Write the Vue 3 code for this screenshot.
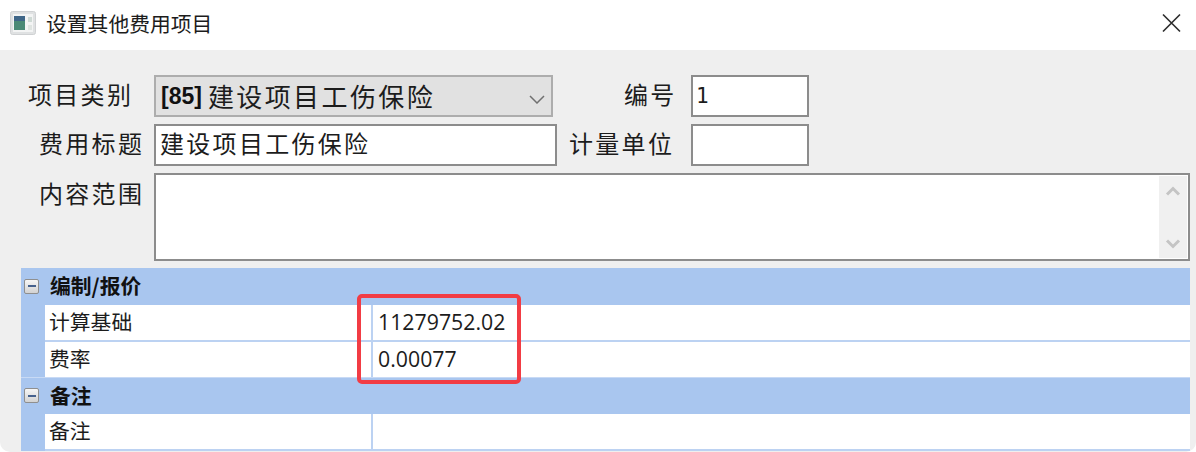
<script setup>
const sections = [
  { title: '编制/报价', rows: [{ k: '计算基础', v: '11279752.02' }, { k: '费率', v: '0.00077', tight: true }] },
  { title: '备注', rows: [{ k: '备注', v: '' }] }
]
</script>

<template>
  <div class="dialog">
    <header class="titlebar">
      <svg class="appicon" width="26" height="24" viewBox="0 0 26 24">
        <rect x="0.5" y="0.5" width="25" height="23" rx="2" fill="#dfe1e2" stroke="#cfd1d3" />
        <rect x="3" y="3" width="20" height="18" fill="#f3f4f4" />
        <rect x="4" y="5" width="11" height="14" fill="#4b8a76" />
        <rect x="4" y="5" width="11" height="5" fill="#3f6688" />
        <rect x="18" y="6" width="4" height="5" fill="#cfdad5" />
        <rect x="18" y="14" width="4" height="5" fill="#dfe4e1" />
      </svg>
      <span class="title">设置其他费用项目</span>
      <svg class="close" width="20" height="20" viewBox="0 0 20 20">
        <path d="M2 1.5 L19 18.5 M19 1.5 L2 18.5" stroke="#2b2b2b" stroke-width="1.6" fill="none" />
      </svg>
    </header>

    <main class="body">
      <section class="form">
        <div class="row">
          <label class="label first">项目类别</label>
          <div class="select">
            <b class="code">[85]</b>
            <span class="selected">建设项目工伤保险</span>
            <svg class="chev" width="16" height="9" viewBox="0 0 16 9">
              <path d="M1 1 L8 8 L15 1" stroke="#707070" stroke-width="1.5" fill="none" />
            </svg>
          </div>
          <label class="label num">编号</label>
          <div class="input small mono">1</div>
        </div>
        <div class="row">
          <label class="label">费用标题</label>
          <div class="input wide">建设项目工伤保险</div>
          <label class="label unit">计量单位</label>
          <div class="input small"></div>
        </div>
        <div class="row area-row">
          <label class="label">内容范围</label>
          <div class="textarea">
            <div class="scrollbar">
              <svg width="16" height="10" viewBox="0 0 16 10">
                <path d="M2 8.5 L8 2.5 L14 8.5" stroke="#c4c4c4" stroke-width="3" fill="none" />
              </svg>
              <svg width="16" height="10" viewBox="0 0 16 10">
                <path d="M2 1.5 L8 7.5 L14 1.5" stroke="#c4c4c4" stroke-width="3" fill="none" />
              </svg>
            </div>
          </div>
        </div>
      </section>

      <section class="grid">
        <template v-for="s in sections" :key="s.title">
          <div class="group">
            <span class="toggle"><i></i></span>
            <strong>{{ s.title }}</strong>
          </div>
          <div v-for="r in s.rows" :key="r.k" class="prop" :class="{ tight: r.tight }">
            <div class="key">{{ r.k }}</div>
            <div class="val">{{ r.v }}</div>
          </div>
        </template>
        <div class="highlight"></div>
      </section>
    </main>
  </div>
</template>

<style>
html, body { margin: 0; background: #fff; }
</style>

<style scoped>
.dialog {
  width: 1196px;
  height: 452px;
  display: flex;
  flex-direction: column;
  overflow: hidden;
  font-family: "Noto Sans CJK SC", sans-serif;
  color: #1c1c1c;
  background: #fff;
}
.titlebar {
  height: 50px;
  flex: none;
  display: flex;
  align-items: center;
  padding: 0 15px 4px 10px;
  box-sizing: border-box;
}
.appicon { flex: none; }
.title { margin-left: 10px; font-size: 20.8px; line-height: 26px; }
.close { margin-left: auto; }
.body {
  flex: 1;
  background: #efefef;
  border-radius: 0 0 10px 10px;
  padding: 25px 6px 0 21px;
  display: flex;
  flex-direction: column;
  min-height: 0;
}
.form { display: flex; flex-direction: column; gap: 7px; }
.row { display: flex; align-items: center; height: 42px; }
.area-row { height: 88px; align-items: flex-start; }
.label {
  width: 122px;
  flex: none;
  box-sizing: border-box;
  padding-left: 18px;
  padding-bottom: 4px;
  font-size: 24px;
  letter-spacing: 2.3px;
  line-height: 36px;
  white-space: nowrap;
}
.label.first { padding-left: 7px; }
.area-row .label { line-height: 40px; padding-bottom: 0; }
.label.num { width: 123px; padding-left: 71px; margin-right: 15px; }
.label.unit { width: 134px; padding-left: 12px; }
.select {
  width: 399px;
  height: 42px;
  box-sizing: border-box;
  flex: none;
  margin-left: 11px;
  background: #e1e1e1;
  border: 2px solid #adadad;
  display: flex;
  align-items: center;
  padding-left: 5px;
  position: relative;
}
.code { font-family: "Liberation Sans", sans-serif; font-size: 23px; color: #111; }
.selected { margin-left: 6px; font-size: 26px; letter-spacing: 2.4px; line-height: 36px; }
.chev { position: absolute; right: 6px; top: 18px; }
.input {
  height: 42px;
  box-sizing: border-box;
  background: #fff;
  border: 2px solid #8c8c8c;
  display: flex;
  align-items: center;
  padding-left: 5px;
  flex: none;
  white-space: nowrap;
}
.input.small { width: 118px; }
.input.wide { width: 403px; margin-left: 11px; font-size: 24px; letter-spacing: 2.3px; padding-bottom: 6px; padding-left: 4px; }
.mono { font-family: "DejaVu Sans Mono", monospace; font-size: 21px; padding-left: 3px; }
.textarea {
  width: 1036px;
  height: 88px;
  margin-left: 11px;
  flex: none;
  box-sizing: border-box;
  background: #fff;
  border: 2px solid #8c8c8c;
  display: flex;
  justify-content: flex-end;
  padding: 1px 1px 1px 0;
}
.scrollbar {
  width: 28px;
  background: #f0f0f0;
  display: flex;
  flex-direction: column;
  justify-content: space-between;
  align-items: center;
  padding: 10px 0 9px;
  box-sizing: border-box;
}
.grid {
  position: relative;
  margin-top: 7px;
  width: 1169px;
  background: #a9c6ef;
  flex: none;
  font-size: 20.8px;
}
.group {
  height: 37px;
  box-sizing: border-box;
  display: flex;
  align-items: center;
  padding-left: 3px;
  padding-bottom: 1px;
}
.prop + .group { border-top: 1px solid #c8daf5; }
.group strong { margin-left: 11px; font-weight: 700; color: #111; line-height: 26px; padding-bottom: 2px; }
.toggle {
  width: 15px;
  height: 15px;
  box-sizing: border-box;
  border: 1px solid #8f8f8f;
  border-radius: 2px;
  background: linear-gradient(#f6f6f6, #d2d2d2);
  display: flex;
  align-items: center;
  justify-content: center;
  flex: none;
}
.toggle i { display: block; width: 8px; height: 2px; background: #46618d; }
.prop {
  height: 37px;
  margin-left: 24px;
  display: flex;
  background: #fff;
  border-bottom: 2px solid #bcd2f2;
  box-sizing: border-box;
}
.prop.tight { height: 35px; border-bottom: 0; }
.key {
  width: 326px;
  flex: none;
  padding-left: 4px;
  box-sizing: border-box;
  line-height: 33px;
}
.val {
  flex: 1;
  border-left: 2px solid #bcd2f2;
  padding-left: 5px;
  font-family: "Open Sans", sans-serif;
  font-size: 21.3px;
  line-height: 34px;
}
.highlight {
  position: absolute;
  left: 336px;
  top: 26px;
  width: 164px;
  height: 90px;
  box-sizing: border-box;
  border: 4px solid #f23c44;
  border-radius: 5px;
}
</style>
